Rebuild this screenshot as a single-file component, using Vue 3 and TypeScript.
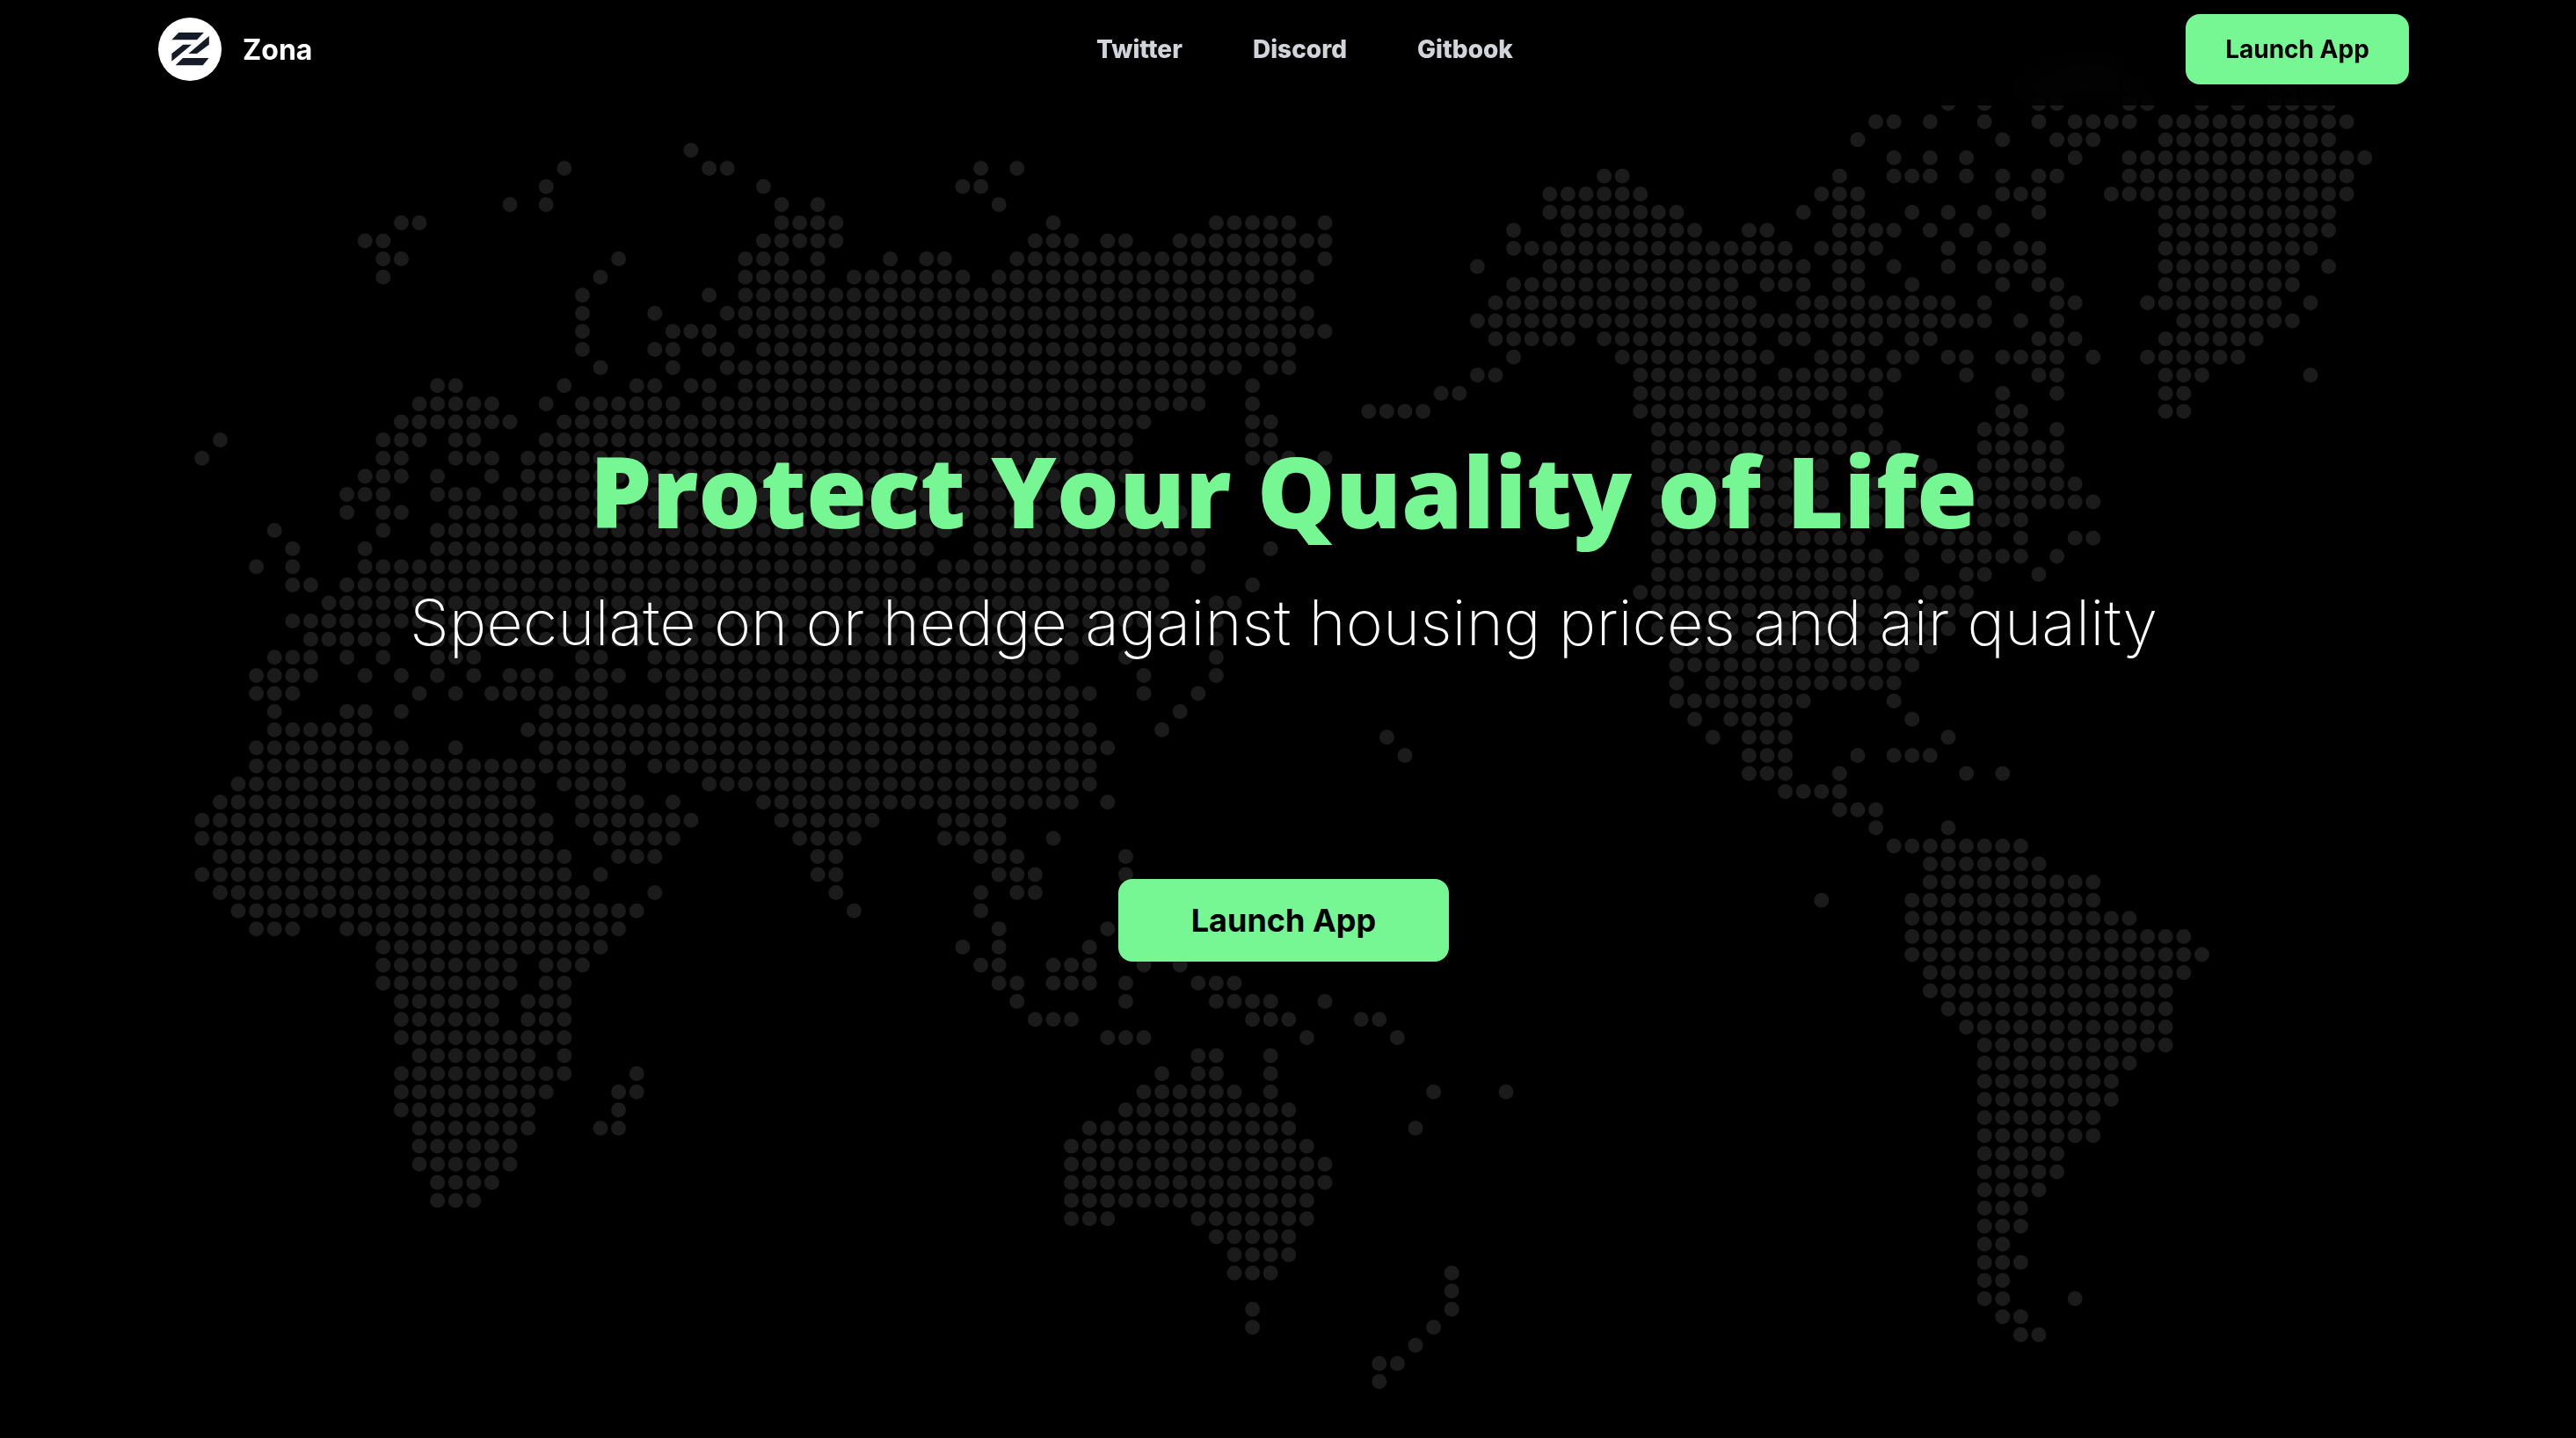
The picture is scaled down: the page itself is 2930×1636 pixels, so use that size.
<script setup lang="ts">
type Run = [number, number]
interface Landmass {
  left: number
  top: number
  rows: string[]
}

const PITCH = 20.6

const navLinks = ['Twitter', 'Discord', 'Gitbook']

// Each row lists the filled columns as single numbers or inclusive ranges.
const oldWorld: Landmass = {
  left: 229.8,
  top: 171,
  rows: [
    '27',
    '20 28-29 43 45',
    '19 31 42-43',
    '17 19 32 34 44',
    '11-12 32-35 47 56-60 62',
    '9-10 31-35 46-48 50-51 54-62',
    '10-11 23 30-32 34 38 40-41 45-60 62',
    '10 22 30-34 36-42 44-61',
    '21 28 30-60',
    '21 25 29-61',
    '21 26-28 30-62',
    '21 25-26 28-29 31-60',
    '22 26 29-57 59-60',
    '13-14 20 24-25 27-28 30-55 58',
    '12-16 19 21-26 28-55 58',
    '11-17 20-52 58-59',
    '1 10-12 14-15 19-51 58-59',
    '0 10-11 14-16 18-51 58-60 62',
    '9-11 13 16 18-51',
    '8-10 13-15 17-50',
    '8 10-11 14-17 19-52 54',
    '4 10 13-41 43-53 55',
    '5 9 13-40 43-55 59',
    '3 5 9-39 41-53 55',
    '5-6 8-53 58',
    '7-53 56-57',
    '5-53 56',
    '6-10 13-50 56',
    '4-6 8 10 13-15 21-22 25-48 51 56',
    '3-6 9 11 13 15 17-19 21-23 25-47 52 56',
    '3-5 12 14 16-22 26-49 52 55',
    '4 8-9 11 19-48 54',
    '4-9 18-49 53',
    '3-11 14 19-50',
    '3-23 25-49',
    '2-18 20-23 28-49',
    '1-18 21-24 26 31-48 50',
    '0-19 21-27 32-37 41-44',
    '0-19 22-26 33-36 41-44 47',
    '1-20 23-25 34-35 43-45 51',
    '0-20 22 34-35 44-46 51',
    '1-21 25 35 43 45-46',
    '2-24 36 43',
    '3-5 8-23 44 50',
    '10-22 42 44 49',
    '10-17 19-21 43-44 47-49 52 54',
    '10-17 19-20 44-45 47-49 51 55-57',
    '11-16 18-20 45 51 56-59 62',
    '11-16 18-20 46-48 58-60 64-65',
    '11-20 50-52 61 66',
    '12-18 20 55-56 59',
    '11-20 24 53 55-56 59',
    '11-19 23-24 52-57 59 68 72',
    '11-18 23 51-60',
    '12-18 22-23 49-60 67',
    '12-17 48-61',
    '12-17 48-62',
    '13-16 48-62',
    '13-15 48-61',
    '48-50 55-61',
    '56-60',
    '57-60',
    '57-59 69',
    '69',
    '58 69',
    '58 68',
    '67',
    '65-66',
    '65',
  ],
}

const newWorld: Landmass = {
  left: 1556.8,
  top: 76.6,
  rows: [
    '38-41',
    '36-42 49-51',
    '32 34 37-38 42-43 46 48 50-53',
    '28-29 31 34 37 39-42 44-54',
    '27 35 38-40 44-53',
    '29 31 33 39 42-55',
    '13-14 26 29-31 33 35 37-38 42-54',
    '10-15 25-27 35-37 41-54',
    '10-17 24 26-27 30 32 34 37 44-53',
    '8 11-18 21-22 26-29 31 33 35 44-53',
    '8-23 25-28 32 34 36-37 44-52',
    '6 10-24 26-27 29 32 34-37 44-51 53',
    '8-20 22-24 26-27 30 35 37-38 44-51',
    '7-21 24-32 34 38-39 43-50 52',
    '6-34 36 38 45-51',
    '7-11 13-21 23-24 26-28 30-31 37-39 44-49',
    '8 14-22 25-27 29-30 32-33 35-38 40 43-48',
    '6-7 15-21 23-29 33 37-38 44-46 52',
    '4-5 15-26 28 35 38 44-45',
    '0-3 15-24 26-28 35-36 44-45',
    '16-26 28 34-36 38',
    '16-29 34-38',
    '16-25 27 29 31 34-38',
    '16-25 27-31 34-39',
    '16-25 27-31 34-40',
    '16-31 34-36',
    '16-27 30-34 36 39-40',
    '16-28 30 32-36 38',
    '16-28 30 33-34 37',
    '15-29 31-33',
    '16-33',
    '16-32',
    '17-31',
    '17-30',
    '17 19-29',
    '17-24 29',
    '18 20-23 30',
    '1 19 21-23 32',
    '2 21-23 27 29-31',
    '21-23 26 33 35',
    '23-26',
    '26-28',
    '28 32',
    '29-36',
    '31-37',
    '31-40',
    '25 30-40',
    '30-42',
    '30-45',
    '30-46',
    '31-45',
    '31-44',
    '32-44',
    '33-44',
    '34-44',
    '34-42',
    '34-41',
    '34-41',
    '34-40',
    '34-40',
    '34-38',
    '34-38',
    '34-37',
    '34-36',
    '34-36',
    '34-35',
    '34-36',
    '34-35',
    '34-35 39',
    '35-36',
    '36-37',
  ],
}

function parseRow(row: string): Run[] {
  return row.split(' ').map((part): Run => {
    const [from, to] = part.split('-').map(Number)
    return [from, to ?? from]
  })
}

// A zero-length segment with a round cap paints one dot.
function dotPath(land: Landmass): string {
  const out: string[] = []
  land.rows.forEach((row, r) => {
    const y = (land.top + r * PITCH).toFixed(1)
    for (const [from, to] of parseRow(row)) {
      for (let c = from; c <= to; c++) {
        out.push(`M${(land.left + c * PITCH).toFixed(1)} ${y}h0`)
      }
    }
  })
  return out.join('')
}

const landPaths = [dotPath(oldWorld), dotPath(newWorld)]
</script>

<template>
  <div class="page">
    <svg class="map" viewBox="0 0 2930 1636" aria-hidden="true">
      <path v-for="(d, i) in landPaths" :key="i" :d="d" />
    </svg>

    <header class="header">
      <div class="bar">
        <a class="brand" href="#">
          <svg class="logo" viewBox="0 0 72 72" aria-hidden="true">
            <circle cx="36" cy="36" r="36" fill="#fff" />
            <g fill="#161c27">
              <path d="M23.3 17H51.8L44 25.3H15.3Z" />
              <path d="M57.8 21V30.7L44 41H34.4Z" />
              <path d="M28.3 30.7H38L15.3 49.7V41Z" />
              <path d="M28 46H57.5L50.7 54.3H19.6Z" />
            </g>
          </svg>
          <span>Zona</span>
        </a>
        <nav class="nav">
          <a v-for="link in navLinks" :key="link" href="#">{{ link }}</a>
        </nav>
        <button class="launch launch-small" type="button">Launch App</button>
      </div>
    </header>

    <main class="hero">
      <h1>Protect Your Quality of Life</h1>
      <p>Speculate on or hedge against housing prices and air quality</p>
      <button class="launch launch-large" type="button">Launch App</button>
    </main>
  </div>
</template>

<style>
body {
  margin: 0;
  background: #000;
}
</style>

<style scoped>
.page {
  position: relative;
  min-height: 100vh;
  box-sizing: border-box;
  padding-right: 10px;
  overflow: hidden;
  background: #000;
  color: #fff;
  font-family: Inter, "Liberation Sans", sans-serif;
}

.map {
  position: absolute;
  top: 0;
  left: 0;
  width: 100%;
  fill: none;
  stroke: #1b1b1b;
  stroke-width: 17;
  stroke-linecap: round;
}

.header {
  position: relative;
  margin-right: -10px;
  padding-right: 10px;
  background: rgba(0, 0, 0, 0.8);
  backdrop-filter: blur(16px);
}

.bar {
  display: flex;
  align-items: center;
  justify-content: space-between;
  box-sizing: border-box;
  max-width: 2560px;
  height: 120px;
  margin: 0 auto;
  padding-bottom: 8px;
}

.brand {
  display: flex;
  align-items: center;
  gap: 24px;
  min-width: 302px;
  color: #fff;
  font-size: 32px;
  font-weight: 700;
  text-decoration: none;
}

.logo {
  width: 72px;
  height: 72px;
}

.nav {
  display: flex;
  gap: 80px;
}

.nav a {
  color: #d1d5db;
  font-size: 28px;
  font-weight: 800;
  text-decoration: none;
}

.launch {
  border: 0;
  border-radius: 16px;
  background: #77f694;
  color: #000;
  font-family: inherit;
  font-weight: 700;
  cursor: pointer;
}

.launch-small {
  width: 254px;
  height: 80px;
  font-size: 28px;
}

.launch-large {
  width: 376px;
  height: 94px;
  margin-top: 248px;
  font-size: 36px;
}

.hero {
  position: relative;
  display: flex;
  flex-direction: column;
  align-items: center;
  padding-top: 368px;
  text-align: center;
}

h1 {
  margin: 0;
  color: #77f694;
  font-family: "Open Sans", Inter, sans-serif;
  font-size: 112px;
  font-weight: 800;
  line-height: 140px;
}

p {
  margin: 36px 0 0;
  font-size: 72px;
  font-weight: 200;
  line-height: 88px;
}
</style>
